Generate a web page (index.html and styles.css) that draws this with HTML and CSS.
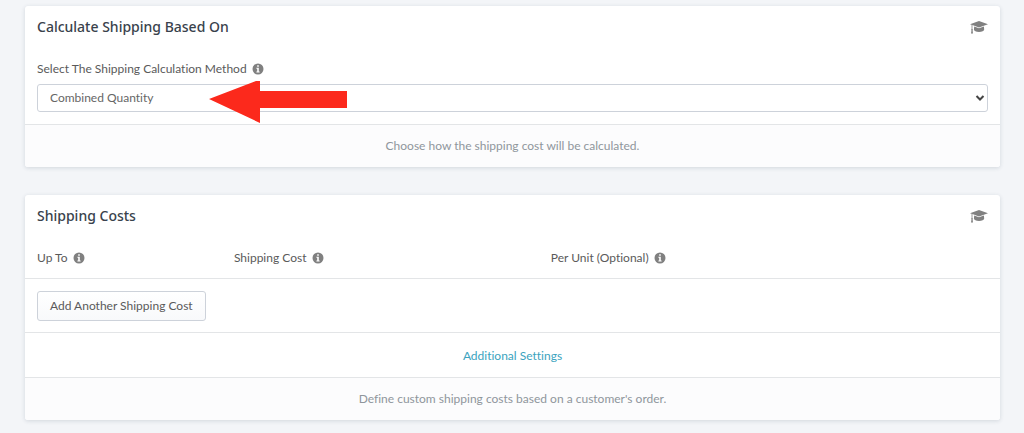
FILE: index.html
```html
<!DOCTYPE html>
<html lang="en">
<head>
    <meta charset="utf-8">
    <meta name="viewport" content="width=device-width, initial-scale=1">
    <title>Shipping</title>
    <link rel="stylesheet" href="styles.css">
</head>

<body>
    <!-- shared icons -->
    <svg class="sprite" aria-hidden="true">
        <symbol id="icon-cap" viewBox="0 0 18 14">
            <path d="M9 1 L18 4.2 L9 7.4 L2.4 5.1 L2.4 9 L3 9.8 L2.6 10.4 L3 13.4 L1 13.4 L1.5 10.4 L1.1 9.8 L1.6 9 L1.6 4.8 L0 4.2 Z" />
            <path d="M4.2 6.6 L9 8.3 L13.9 6.6 L14.2 9.6 C14.2 11 11.8 12 9 12 C6.2 12 3.9 11 3.9 9.6 Z" />
        </symbol>
        <symbol id="icon-info" viewBox="0 0 12 12">
            <path fill-rule="evenodd" d="M6 0.5 A5.5 5.5 0 1 1 6 11.5 A5.5 5.5 0 1 1 6 0.5 Z M5.2 2.2 V3.8 H6.8 V2.2 Z M4.4 4.8 V5.8 H5.2 V8.4 H4.4 V9.4 H7.6 V8.4 H6.8 V4.8 Z" />
        </symbol>
    </svg>

    <main class="page">
        <section class="card">
            <div class="card-header">
                <h2>Calculate Shipping Based On</h2>
                <a class="help" href="#" aria-label="Learn more"><svg class="cap"><use href="#icon-cap" /></svg></a>
            </div>
            <div class="card-body">
                <label for="method">Select The Shipping Calculation Method <svg class="info"><use href="#icon-info" /></svg></label>
                <div class="field">
                    <select id="method" name="method">
                        <option>Combined Quantity</option>
                    </select>
                    <svg class="chevron" viewBox="0 0 10 8" aria-hidden="true"><path d="M1.5 2 L5 5.5 L8.5 2" /></svg>
                    <svg class="arrow" viewBox="0 0 138 42" aria-hidden="true">
                        <path d="M0 18 L47 0 H51 V10 H138 V27 H51 V42 Z" />
                    </svg>
                </div>
            </div>
            <p class="card-footer">Choose how the shipping cost will be calculated.</p>
        </section>

        <section class="card">
            <div class="card-header">
                <h2>Shipping Costs</h2>
                <a class="help" href="#" aria-label="Learn more"><svg class="cap"><use href="#icon-cap" /></svg></a>
            </div>
            <table class="costs">
                <thead>
                    <tr>
                        <th class="col-upto">Up To <svg class="info"><use href="#icon-info" /></svg></th>
                        <th class="col-cost">Shipping Cost <svg class="info"><use href="#icon-info" /></svg></th>
                        <th>Per Unit (Optional) <svg class="info"><use href="#icon-info" /></svg></th>
                    </tr>
                </thead>
                <tbody>
                    <tr>
                        <td colspan="3"><button type="button">Add Another Shipping Cost</button></td>
                    </tr>
                </tbody>
            </table>
            <div class="card-link"><a href="#">Additional Settings</a></div>
            <p class="card-footer">Define custom shipping costs based on a customer's order.</p>
        </section>
    </main>
</body>
</html>
```

FILE: styles.css
```css
* {
    box-sizing: border-box;
}

body {
    margin: 0;
    background: #f3f5f8;
    color: #5a5a5a;
    font-family: Lato, "Open Sans", sans-serif;
    font-size: 12px;
    font-variant-ligatures: none;
    line-height: 18px;
}

.sprite {
    display: none;
}

.page {
    display: flex;
    flex-direction: column;
    gap: 28px;
    padding: 6px 24px 12px 25px;
}

/* Cards */
.card {
    background: #fff;
    border-radius: 3px;
    box-shadow: 0 1px 4px rgba(40, 60, 80, 0.16);
    overflow: hidden;
}

.card-header {
    display: flex;
    align-items: center;
    justify-content: space-between;
    height: 42px;
    padding: 0 12px;
}

.card-header h2 {
    margin: 0;
    color: #39424c;
    font-family: "Noto Sans", "Open Sans", sans-serif;
    font-size: 14px;
    font-weight: 500;
}

.help {
    display: flex;
}

.cap {
    width: 18px;
    height: 14px;
    fill: #808080;
}

.info {
    width: 12px;
    height: 12px;
    margin-left: 2px;
    fill: #808080;
    vertical-align: -2px;
}

.card-body {
    padding: 12px;
}

.card-body label {
    display: block;
    margin-bottom: 6px;
}

.card-footer {
    margin: 0;
    padding: 12px;
    border-top: 1px solid #e3e5e7;
    background: #fcfcfd;
    color: #8f969c;
    text-align: center;
}

/* Method drop-down */
.field {
    position: relative;
}

select {
    display: block;
    width: 100%;
    height: 28px;
    padding: 0 12px;
    appearance: none;
    background: #fff;
    border: 1px solid #cdd2da;
    border-radius: 3px;
    color: #666;
    font: inherit;
}

.chevron {
    position: absolute;
    top: 10px;
    right: 3px;
    width: 10px;
    height: 8px;
    fill: none;
    stroke: #444;
    stroke-width: 2;
    pointer-events: none;
}

.arrow {
    position: absolute;
    top: -3px;
    left: 172px;
    width: 138px;
    height: 42px;
    fill: #fc291c;
    pointer-events: none;
}

/* Costs table */
.costs {
    width: 100%;
    border-spacing: 0;
    table-layout: fixed;
}

.costs th {
    padding: 12px 12px 11px;
    font-weight: 400;
    text-align: left;
}

.costs td {
    padding: 12px 12px 11px;
    border-top: 1px solid #e3e5e7;
}

.col-upto {
    width: 20.2%;
}

.col-cost {
    width: 32.5%;
}

button {
    display: block;
    height: 30px;
    padding: 0 12px;
    background: linear-gradient(#fff, #f8f9fb);
    border: 1px solid #cdd2da;
    border-radius: 3px;
    color: #5a5a5a;
    font: inherit;
}

.card-link {
    padding: 14px 12px 12px;
    border-top: 1px solid #e3e5e7;
    text-align: center;
}

.card-link a {
    color: #3ba3be;
    text-decoration: none;
}
```
